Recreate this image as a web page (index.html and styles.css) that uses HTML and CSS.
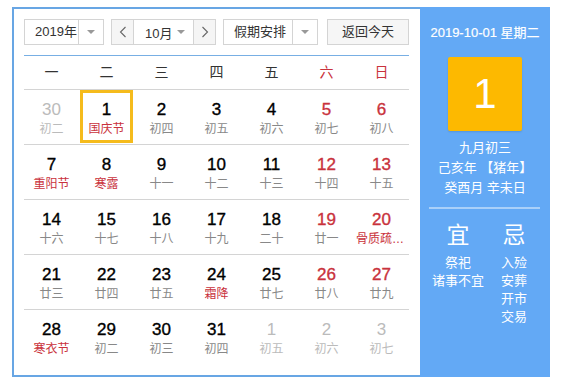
FILE: index.html
```html
<!DOCTYPE html>
<html lang="zh-CN">
<head>
<meta charset="utf-8">
<title>万年历</title>
<link rel="stylesheet" href="styles.css">
</head>
<body>
<div class="cal">
  <div class="main">
    <div class="toolbar">
      <div class="sel sel-year"><span class="sel-text">2019年</span><span class="sel-arrow"><i class="tri"></i></span></div>
      <div class="month">
        <span class="nav"><svg width="8" height="12" viewBox="0 0 8 12"><path d="M6.5 1 L1.5 6 L6.5 11" fill="none" stroke="#666" stroke-width="1.1"/></svg></span>
        <span class="month-mid"><span>10月</span><i class="tri"></i></span>
        <span class="nav"><svg width="8" height="12" viewBox="0 0 8 12"><path d="M1.5 1 L6.5 6 L1.5 11" fill="none" stroke="#666" stroke-width="1.1"/></svg></span>
      </div>
      <div class="sel sel-hol"><span class="sel-text">假期安排</span><span class="sel-arrow"><i class="tri"></i></span></div>
      <div class="btn">返回今天</div>
    </div>
    <div class="week">
      <span>一</span><span>二</span><span>三</span><span>四</span><span>五</span><span class="red">六</span><span class="red">日</span>
    </div>
    <div class="days">
      <div class="cell other"><b>30</b><em>初二</em></div>
      <div class="cell today"><b>1</b><em class="hol">国庆节</em></div>
      <div class="cell"><b>2</b><em>初四</em></div>
      <div class="cell"><b>3</b><em>初五</em></div>
      <div class="cell"><b>4</b><em>初六</em></div>
      <div class="cell we"><b>5</b><em>初七</em></div>
      <div class="cell we"><b>6</b><em>初八</em></div>

      <div class="cell"><b>7</b><em class="hol">重阳节</em></div>
      <div class="cell"><b>8</b><em class="hol">寒露</em></div>
      <div class="cell"><b>9</b><em>十一</em></div>
      <div class="cell"><b>10</b><em>十二</em></div>
      <div class="cell"><b>11</b><em>十三</em></div>
      <div class="cell we"><b>12</b><em>十四</em></div>
      <div class="cell we"><b>13</b><em>十五</em></div>

      <div class="cell"><b>14</b><em>十六</em></div>
      <div class="cell"><b>15</b><em>十七</em></div>
      <div class="cell"><b>16</b><em>十八</em></div>
      <div class="cell"><b>17</b><em>十九</em></div>
      <div class="cell"><b>18</b><em>二十</em></div>
      <div class="cell we"><b>19</b><em>廿一</em></div>
      <div class="cell we"><b>20</b><em class="hol">骨质疏松日</em></div>

      <div class="cell"><b>21</b><em>廿三</em></div>
      <div class="cell"><b>22</b><em>廿四</em></div>
      <div class="cell"><b>23</b><em>廿五</em></div>
      <div class="cell"><b>24</b><em class="hol">霜降</em></div>
      <div class="cell"><b>25</b><em>廿七</em></div>
      <div class="cell we"><b>26</b><em>廿八</em></div>
      <div class="cell we"><b>27</b><em>廿九</em></div>

      <div class="cell"><b>28</b><em class="hol">寒衣节</em></div>
      <div class="cell"><b>29</b><em>初二</em></div>
      <div class="cell"><b>30</b><em>初三</em></div>
      <div class="cell"><b>31</b><em>初四</em></div>
      <div class="cell other"><b>1</b><em>初五</em></div>
      <div class="cell other"><b>2</b><em>初六</em></div>
      <div class="cell other"><b>3</b><em>初七</em></div>
    </div>
  </div>
  <div class="side">
    <div class="side-date">2019-10-01 星期二</div>
    <div class="big">1</div>
    <div class="lunar">
      <div>九月初三</div>
      <div>己亥年 【猪年】</div>
      <div>癸酉月 辛未日</div>
    </div>
    <div class="sep"></div>
    <div class="yiji">
      <div class="col">
        <div class="head">宜</div>
        <div>祭祀</div>
        <div>诸事不宜</div>
      </div>
      <div class="col">
        <div class="head">忌</div>
        <div>入殓</div>
        <div>安葬</div>
        <div>开市</div>
        <div>交易</div>
      </div>
    </div>
  </div>
</div>
</body>
</html>
```

FILE: styles.css
```css
* { box-sizing: border-box; }
body {
  margin: 0;
  padding: 7px 12px;
  background: #fff;
  font-family: "Liberation Sans", "Noto Sans CJK SC", sans-serif;
  color: #333;
}
.cal {
  display: flex;
  width: 538px;
  height: 370px;
}
.main {
  width: 408px;
  height: 370px;
  border: 2px solid #68a6e4;
  border-right: none;
  padding: 10px 11px 0 10px;
}
.toolbar {
  display: flex;
  height: 26px;
  margin-bottom: 10px;
  font-size: 13px;
  color: #333;
}
.sel {
  display: flex;
  height: 26px;
  border: 1px solid #d4d4d4;
  background: #fff;
}
.sel-year { width: 80px; margin-right: 7px; }
.sel-hol { width: 95px; margin-right: 9px; }
.sel-text {
  flex: 1;
  padding-left: 10px;
  line-height: 24px;
  border-right: 1px solid #d4d4d4;
  white-space: nowrap;
}
.sel-arrow {
  width: 24px;
  display: flex;
  align-items: center;
  justify-content: center;
}
.tri {
  display: inline-block;
  width: 0;
  height: 0;
  border-left: 4px solid transparent;
  border-right: 4px solid transparent;
  border-top: 4px solid #999;
}
.month {
  display: flex;
  width: 105px;
  height: 26px;
  margin-right: 7px;
  border: 1px solid #d4d4d4;
}
.nav {
  width: 21px;
  display: flex;
  align-items: center;
  justify-content: center;
  background: #f5f5f5;
}
.month-mid {
  flex: 1;
  display: flex;
  align-items: center;
  justify-content: space-between;
  padding: 0 8px 0 11px;
  border-left: 1px solid #d4d4d4;
  border-right: 1px solid #d4d4d4;
  background: #fff;
}
.btn {
  width: 82px;
  height: 26px;
  border: 1px solid #d4d4d4;
  background: #f6f6f6;
  text-align: center;
  line-height: 24px;
}
.week {
  display: grid;
  grid-template-columns: repeat(7, 55px);
  height: 34px;
  border-top: 1px solid #78afe4;
  font-size: 14px;
  line-height: 33px;
  text-align: center;
  color: #333;
}
.red { color: #c9323c; }
.days {
  display: grid;
  grid-template-columns: repeat(7, 55px);
  grid-auto-rows: 55px;
}
.cell {
  position: relative;
  border-top: 1px solid #d4d4d4;
  padding-top: 10px;
  text-align: center;
}
.cell b {
  display: block;
  font-weight: normal;
  font-size: 17px;
  line-height: 20px;
  color: #000;
  font-family: "Liberation Sans", sans-serif;
  -webkit-text-stroke: 0.35px currentColor;
}
.cell em {
  display: block;
  font-style: normal;
  font-size: 12px;
  line-height: 18px;
  color: #888;
  padding: 0 2px;
  white-space: nowrap;
  overflow: hidden;
  text-overflow: ellipsis;
}
.cell.we b { color: #c9323c; }
.cell em.hol { color: #c9323c; }
.cell.other b, .cell.other em { color: #bbb; }
.cell.other b { -webkit-text-stroke: 0; }
.cell.today::after {
  content: "";
  position: absolute;
  left: 1px;
  right: 1px;
  top: 0;
  bottom: 1px;
  border: 3px solid #f5bb1c;
}
.side {
  width: 130px;
  height: 370px;
  background: #63a9f5;
  color: #fff;
  text-align: center;
  padding-top: 17px;
  font-size: 13px;
}
.side-date {
  line-height: 18px;
  white-space: nowrap;
  -webkit-text-stroke: 0.2px currentColor;
}
.big {
  width: 74px;
  height: 74px;
  margin: 15px auto 0;
  background: #fdb900;
  border-radius: 2px;
  box-shadow: 0 1px 2px rgba(0,0,0,0.12);
  font-size: 42px;
  line-height: 74px;
  color: #fff;
  font-family: "Liberation Sans", sans-serif;
}
.lunar {
  margin-top: 7px;
  line-height: 20px;
  white-space: nowrap;
}
.sep {
  height: 2px;
  margin: 9px 10px 0 9px;
  background: rgba(255,255,255,0.45);
}
.yiji {
  display: grid;
  grid-template-columns: 56px 56px;
  padding-left: 10px;
  margin-top: 12px;
  line-height: 18px;
}
.yiji .head {
  font-size: 23px;
  line-height: 28px;
  margin-bottom: 5px;
}
.col { white-space: nowrap; }
```
